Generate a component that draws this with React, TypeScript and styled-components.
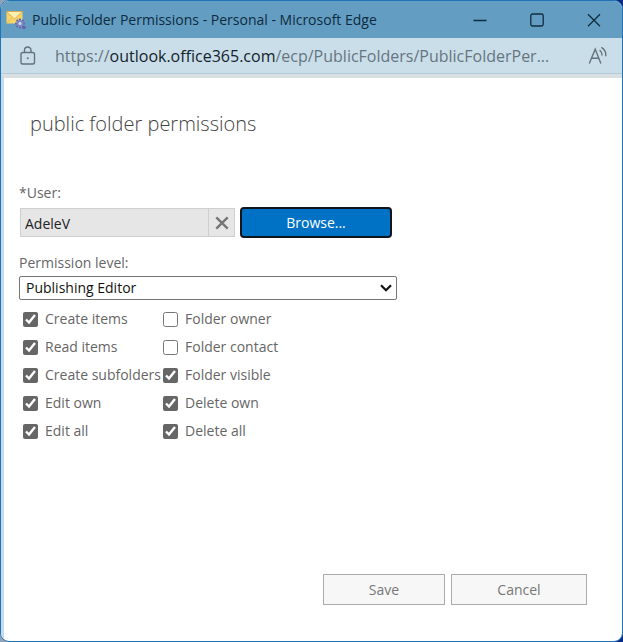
import React, { useState } from "react";
import styled, { createGlobalStyle } from "styled-components";

const GlobalStyle = createGlobalStyle`
  * { box-sizing: border-box; }
  body {
    margin: 0;
    background: linear-gradient(to right, #8fa3b8 50%, #0a2a86 50%);
    font-family: "Open Sans", "Noto Sans", sans-serif;
    font-size: 14px;
    line-height: 20px;
    color: #666;
  }
  button, input, select { font: inherit; margin: 0; }
`;

const Window = styled.div`
  display: flex;
  flex-direction: column;
  min-height: 100vh;
  border: 1px solid #1f74b8;
  border-radius: 9px;
  overflow: hidden;
  background: #fff;
`;

const TitleBar = styled.header`
  display: flex;
  align-items: center;
  height: 37px;
  padding-left: 5px;
  background: #649dc2;
  color: #0d2b40;
`;

const WindowTitle = styled.span`
  flex: 1;
  min-width: 0;
  margin-left: 6px;
  overflow: hidden;
  text-overflow: ellipsis;
  white-space: nowrap;
`;

const CaptionButton = styled.button`
  display: flex;
  align-items: center;
  justify-content: center;
  width: 57px;
  height: 36px;
  padding: 0;
  border: 0;
  background: transparent;
  color: #0f2c3f;
`;

const AddressBar = styled.div`
  display: flex;
  align-items: center;
  height: 36px;
  padding: 0 13px 0 18px;
  background: #cadeea;
  border-bottom: 1px solid #b4cad8;
`;

const Address = styled.div`
  flex: 1;
  min-width: 0;
  margin: 0 16px 0 18px;
  overflow: hidden;
  text-overflow: ellipsis;
  white-space: nowrap;
  font-size: 16px;
  line-height: 26px;
  color: #66757e;
`;

const Host = styled.span`
  color: #14232c;
`;

const IconButton = styled.button`
  display: flex;
  padding: 0;
  border: 0;
  background: transparent;
  color: #66737c;
`;

const Page = styled.main`
  flex: 1;
  display: flex;
  flex-direction: column;
  padding: 31px 35px 36px 15px;
  border-left: 3px solid #c5daec;
  border-top: 4px solid #d9e0e4;
`;

const Heading = styled.h1`
  margin: 0 0 44px 11px;
  font-size: 20px;
  line-height: 30px;
  font-weight: 300;
  color: #444;
`;

const Form = styled.form`
  flex: 1;
  display: flex;
  flex-direction: column;
`;

const FieldLabel = styled.label`
  margin-bottom: 3px;
`;

const UserRow = styled.div`
  display: flex;
  align-items: center;
  margin: 1px 0 15px;
`;

const UserInput = styled.input`
  width: 189px;
  height: 29px;
  margin-left: 1px;
  padding: 2px 4px 0;
  border: 1px solid #cfcfcf;
  border-radius: 0;
  background: #e6e6e6;
  color: #222;
  outline: none;
`;

const ClearButton = styled.button`
  display: flex;
  align-items: center;
  justify-content: center;
  width: 26px;
  height: 29px;
  padding: 0;
  border: 1px solid #cfcfcf;
  border-left: 0;
  background: #e6e6e6;
  color: #777;
`;

const BrowseButton = styled.button`
  width: 152px;
  height: 31px;
  margin-left: 5px;
  padding: 0;
  border: 2px solid #10151c;
  border-radius: 4px;
  background: #0072c6;
  color: #fff;
`;

const SelectBox = styled.div`
  display: grid;
  align-items: center;
  width: 378px;
  margin-bottom: 5px;

  > * { grid-area: 1 / 1; }
  > svg {
    justify-self: end;
    margin-right: 5px;
    pointer-events: none;
  }
`;

const Select = styled.select`
  appearance: none;
  width: 100%;
  height: 24px;
  padding: 0 24px 0 6px;
  border: 1px solid #767676;
  border-radius: 2px;
  background: #fff;
  color: #111;
`;

const Permissions = styled.div`
  display: grid;
  grid-template-columns: 140px 140px;
  grid-auto-rows: 28px;
  padding-left: 4px;
`;

const CheckLabel = styled.label`
  display: flex;
  align-items: center;
  gap: 7px;
  white-space: nowrap;
`;

const Checkbox = styled.input`
  flex: none;
  width: 15px;
  height: 15px;
  accent-color: #666;
`;

const Actions = styled.div`
  display: flex;
  justify-content: flex-end;
  gap: 6px;
  margin-top: auto;
`;

const ActionButton = styled.button<{ $width: number }>`
  width: ${(p) => p.$width}px;
  height: 31px;
  padding: 0;
  border: 1px solid #ababab;
  background: #f7f7f7;
  color: #777;
`;

const MailIcon = () => (
  <svg width="20" height="20" viewBox="0 0 20 20" aria-hidden="true">
    <rect x="0.5" y="1.5" width="16" height="12" fill="#f5d56a" />
    <path d="M0.5 1.5h16L8.5 9z" fill="#fff0b0" stroke="#d49e38" strokeWidth="0.7" />
    <path d="M0.5 13.5 6 7.5M16.5 13.5 11 7.5" stroke="#d9ad4a" strokeWidth="0.7" />
    <g stroke="#6268ad" strokeWidth="2">
      <path d="M14 8.5v10M9 13.5h10M10.5 10l7 7M17.5 10l-7 7" />
    </g>
    <circle cx="14" cy="13.5" r="3.4" fill="#8286c4" />
    <circle cx="14" cy="13.5" r="1.5" fill="#c9dcec" />
    <circle cx="18" cy="17.5" r="1.8" fill="#5e66aa" />
  </svg>
);

const LockIcon = () => (
  <svg width="18" height="20" viewBox="0 0 18 20" fill="none" stroke="#63737d" strokeWidth="1.4" aria-hidden="true">
    <rect x="2" y="6.5" width="13.5" height="11.5" rx="1.8" />
    <path d="M5.5 6.5V4.2a3.2 3.2 0 0 1 6.5 0v2.3" />
    <circle cx="8.75" cy="12.2" r="1" fill="#63737d" stroke="none" />
  </svg>
);

const ReadAloudIcon = () => (
  <svg width="21" height="20" viewBox="0 0 21 20" fill="none" stroke="currentColor" strokeWidth="1.4" strokeLinecap="round" aria-hidden="true">
    <path d="M1.5 17 7.2 3.2 12.7 17M3.5 12.2h7.3" />
    <path d="M12 4.5q2.2 1.8 2 4.5M13.8 1.7q4.4 2.8 4 8" />
  </svg>
);

type Permission = { name: string; granted: boolean };

const permissions: Permission[] = [
  { name: "Create items", granted: true },
  { name: "Folder owner", granted: false },
  { name: "Read items", granted: true },
  { name: "Folder contact", granted: false },
  { name: "Create subfolders", granted: true },
  { name: "Folder visible", granted: true },
  { name: "Edit own", granted: true },
  { name: "Delete own", granted: true },
  { name: "Edit all", granted: true },
  { name: "Delete all", granted: true },
];

export default function App() {
  const [user, setUser] = useState("AdeleV");

  return (
    <>
      <GlobalStyle />
      <Window>
        <TitleBar>
          <MailIcon />
          <WindowTitle>Public Folder Permissions - Personal - Microsoft Edge</WindowTitle>
          <CaptionButton type="button" aria-label="Minimize">
            <svg width="14" height="14" viewBox="0 0 14 14" stroke="currentColor" strokeWidth="1.3">
              <path d="M0.5 7.5h13" />
            </svg>
          </CaptionButton>
          <CaptionButton type="button" aria-label="Maximize">
            <svg width="14" height="14" viewBox="0 0 14 14" fill="none" stroke="currentColor" strokeWidth="1.3">
              <rect x="0.8" y="1" width="12.4" height="12" rx="1.8" />
            </svg>
          </CaptionButton>
          <CaptionButton type="button" aria-label="Close">
            <svg width="14" height="14" viewBox="0 0 14 14" stroke="currentColor" strokeWidth="1.3">
              <path d="M1 1.3l12 12M13 1.3l-12 12" />
            </svg>
          </CaptionButton>
        </TitleBar>
        <AddressBar>
          <LockIcon />
          <Address>
            https://<Host>outlook.office365.com</Host>/ecp/PublicFolders/PublicFolderPer...
          </Address>
          <IconButton type="button" aria-label="Read aloud">
            <ReadAloudIcon />
          </IconButton>
        </AddressBar>
        <Page>
          <Heading>public folder permissions</Heading>
          <Form onSubmit={(e) => e.preventDefault()}>
            <FieldLabel htmlFor="user">*User:</FieldLabel>
            <UserRow>
              <UserInput id="user" type="text" readOnly value={user} />
              <ClearButton type="button" aria-label="Clear user" onClick={() => setUser("")}>
                <svg width="14" height="14" viewBox="0 0 14 14" stroke="currentColor" strokeWidth="2.4">
                  <path d="M1.3 1.3l11.4 11.4M12.7 1.3L1.3 12.7" />
                </svg>
              </ClearButton>
              <BrowseButton type="button">Browse...</BrowseButton>
            </UserRow>
            <FieldLabel htmlFor="level">Permission level:</FieldLabel>
            <SelectBox>
              <Select id="level" defaultValue="Publishing Editor">
                <option>Publishing Editor</option>
              </Select>
              <svg width="12" height="8" viewBox="0 0 12 8" fill="none" stroke="#111" strokeWidth="2.2" aria-hidden="true">
                <path d="M1 1.2l5 5 5-5" />
              </svg>
            </SelectBox>
            <Permissions>
              {permissions.map((p) => (
                <CheckLabel key={p.name}>
                  <Checkbox type="checkbox" defaultChecked={p.granted} />
                  {p.name}
                </CheckLabel>
              ))}
            </Permissions>
            <Actions>
              <ActionButton type="submit" $width={122}>Save</ActionButton>
              <ActionButton type="button" $width={136}>Cancel</ActionButton>
            </Actions>
          </Form>
        </Page>
      </Window>
    </>
  );
}
